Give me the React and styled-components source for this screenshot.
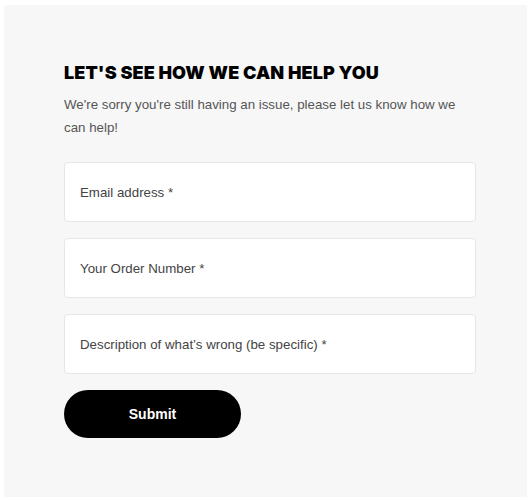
import React from 'react';
import styled, { createGlobalStyle } from 'styled-components';

const GlobalStyle = createGlobalStyle`
  body {
    margin: 5px 3px 3px 4px;
    background: #fff;
    font-family: "Liberation Sans", Arial, sans-serif;
  }
`;

const Panel = styled.div`
  background: #f7f7f7;
  height: 492px;
  box-sizing: border-box;
  padding: 56px 51px 0 60px;
`;

const Title = styled.h1`
  margin: 0;
  font-family: "Inter", "Liberation Sans", sans-serif;
  font-weight: 900;
  font-size: 18px;
  line-height: 24px;
  letter-spacing: 0.1px;
  color: #000;
`;

const Intro = styled.p`
  margin: 8px 0 0;
  font-size: 13.3px;
  line-height: 23px;
  color: #555;
`;

const Form = styled.form`
  margin-top: 23px;
  display: flex;
  flex-direction: column;
  gap: 16px;
`;

const Field = styled.label`
  display: flex;
  align-items: center;
  height: 60px;
  box-sizing: border-box;
  padding: 0 15px;
  background: #fff;
  border: 1px solid #e6e6e6;
  border-radius: 4px;
  font-size: 13.3px;
  color: #444;
`;

const Submit = styled.button`
  width: 177px;
  height: 48px;
  border: none;
  border-radius: 24px;
  background: #000;
  color: #fff;
  font-family: "Liberation Sans", sans-serif;
  font-weight: 700;
  font-size: 14px;
  cursor: pointer;
`;

const fields = [
  'Email address *',
  'Your Order Number *',
  "Description of what\u2019s wrong (be specific) *",
];

export default function App() {
  return (
    <>
      <GlobalStyle />
      <Panel>
        <Title>LET'S SEE HOW WE CAN HELP YOU</Title>
        <Intro>We're sorry you're still having an issue, please let us know how we can help!</Intro>
        <Form onSubmit={(e) => e.preventDefault()}>
          {fields.map((f) => (
            <Field key={f}>{f}</Field>
          ))}
          <Submit type="submit">Submit</Submit>
        </Form>
      </Panel>
    </>
  );
}
